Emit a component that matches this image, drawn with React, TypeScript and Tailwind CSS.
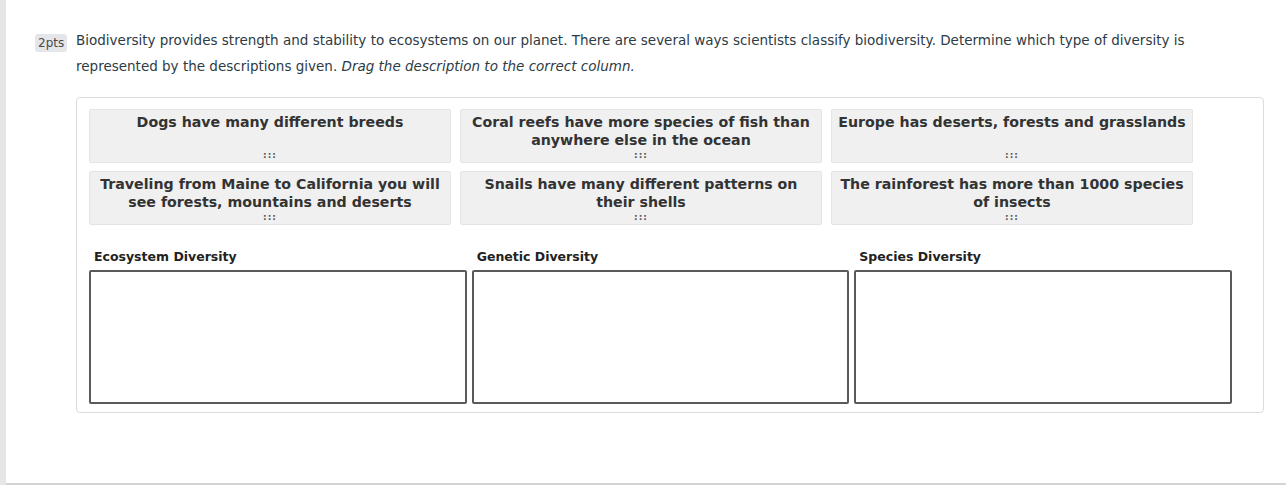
import React from "react";

const cards = [
  "Dogs have many different breeds",
  "Coral reefs have more species of fish than anywhere else in the ocean",
  "Europe has deserts, forests and grasslands",
  "Traveling from Maine to California you will see forests, mountains and deserts",
  "Snails have many different patterns on their shells",
  "The rainforest has more than 1000 species of insects",
];

const columns = ["Ecosystem Diversity", "Genetic Diversity", "Species Diversity"];

const App: React.FC = () => {
  return (
    <div
      className="flex h-[485px] w-[1286px] bg-white text-[#2d3b45]"
      style={{ fontFamily: '"DejaVu Sans", Verdana, sans-serif' }}
    >
      <div className="w-[6px] shrink-0 bg-[#e6e6e6]" />
      <div className="flex flex-1 flex-col border-b-2 border-[#d4d4d4]">
        <div className="flex pl-[29px] pt-[27px]">
          <div className="w-[41px] shrink-0 pt-[3px]">
            <span className="rounded-[3px] bg-[#e5e6ea] px-[3px] py-[2px] text-[12px] text-[#4a4a4a]">
              2pts
            </span>
          </div>
          <p className="pr-[60px] text-[13.5px] leading-[26px]">
            Biodiversity provides strength and stability to ecosystems on our planet. There are several ways scientists classify biodiversity. Determine which type of diversity is represented by the descriptions given.{" "}
            <em>Drag the description to the correct column.</em>
          </p>
        </div>

        <div className="ml-[70px] mt-[18px] w-[1188px] rounded-[4px] border border-[#dcdcdc] pb-[8px] pl-[12px] pt-[11px]">
          <div className="grid w-[1104px] grid-cols-3 gap-x-[9px] gap-y-[8px]">
            {cards.map((text) => (
              <div
                key={text}
                className="flex h-[54px] flex-col items-center rounded-[2px] border border-[#e4e4e4] bg-[#f0f0f0] px-[2px] pt-[3px] text-center"
              >
                <span className="text-[14.2px] font-bold leading-[18px] text-[#333]">{text}</span>
                <span className="mt-auto pb-[1px] text-[9px] font-bold leading-[11px] tracking-[1px] text-[#555]">
                  :::
                </span>
              </div>
            ))}
          </div>

          <div className="mt-[23px] grid w-[1143px] grid-cols-3 gap-[5px]">
            {columns.map((label) => (
              <div key={label} className="flex flex-col">
                <span className="pl-[5px] text-[12.5px] font-bold leading-[17px] text-[#222]">{label}</span>
                <div className="mt-[5px] h-[134px] rounded-[2px] border-2 border-[#5a5a5a]" />
              </div>
            ))}
          </div>
        </div>
      </div>
    </div>
  );
};

export default App;
